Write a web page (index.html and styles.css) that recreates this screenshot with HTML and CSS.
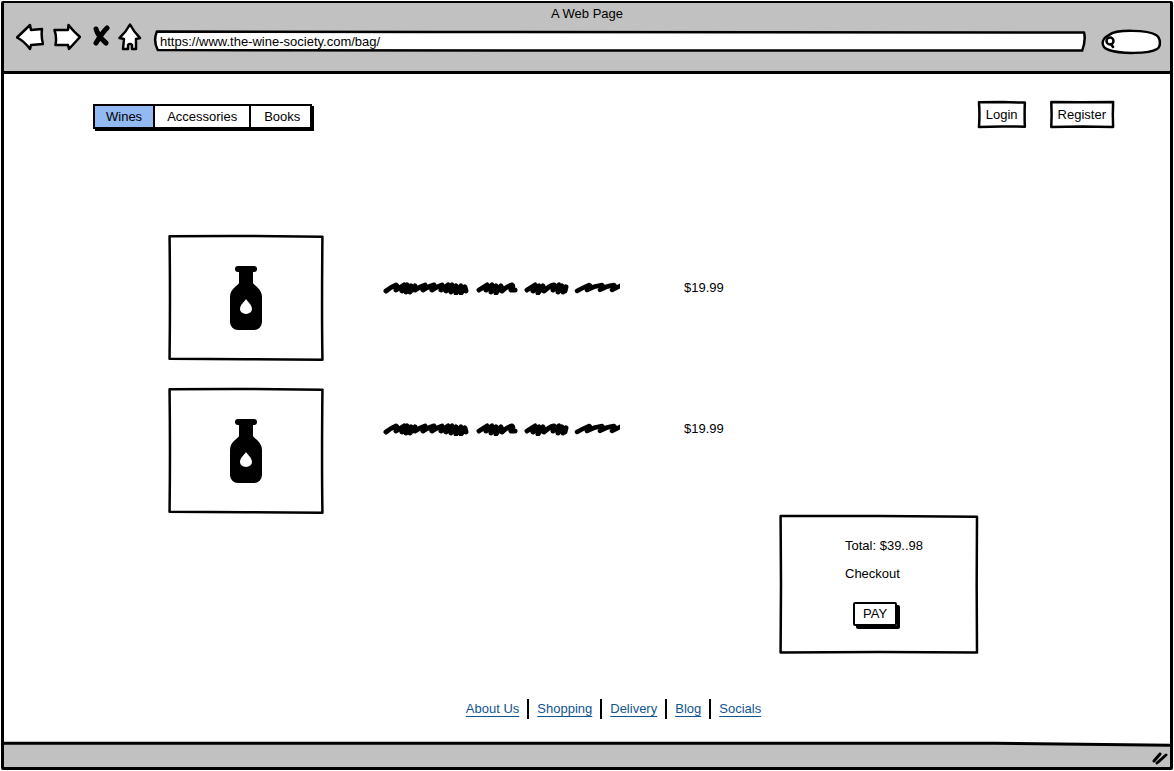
FILE: index.html
```html
<!DOCTYPE html>
<html lang="en">
<head>
<meta charset="utf-8">
<meta name="viewport" content="width=device-width, initial-scale=1">
<title>A Web Page</title>
<link rel="stylesheet" href="styles.css">
</head>
<body>
<svg class="defs" width="0" height="0" aria-hidden="true">
  <symbol id="bottle" viewBox="0 0 32 64">
    <path fill="#000" d="M8 0h16a3 3 0 0 1 0 6h-1v11c0 2 9 5 9 14v25a8 8 0 0 1-8 8H8a8 8 0 0 1-8-8V31C0 22 9 19 9 17V6H8a3 3 0 0 1 0-6z"/>
    <path fill="#fff" d="M16 33c2 3 6 6 6 10a6 5 0 0 1-12 0c0-4 4-7 6-10z"/>
  </symbol>
  <symbol id="scribble" viewBox="0 0 237 14">
    <g fill="none" stroke="#000" stroke-width="5" stroke-linecap="round" stroke-linejoin="round">
      <path d="M3 10Q8 6 13 4Q15 5 13 9L21 4L19 10L24 4L23 11L28 5L27 11L32 5L32 9Q36 6 42 4Q43 6 40 9Q44 6 51 4Q52 6 49 9Q53 6 59 4Q60 6 58 9L65 4L63 10L69 4L68 11L73 5L73 12L78 5L78 12L82 6L83 10"/>
      <path d="M96 9L104 4L103 9L109 4L108 11L113 5L113 12L118 5L119 10Q124 5 129 4Q131 5 128 9L132 9"/>
      <path d="M144 9L152 4L150 10L156 5L155 12L160 5L161 10Q166 5 171 4L170 9L176 4L175 11L179 5L180 11L183 6L182 10"/>
      <path stroke-width="4.500" d="M194 10Q201 6 206 4Q209 5 204 9Q211 5 219 4Q221 5 217 9Q223 5 231 4Q233 5 229 9Q233 7 239 4"/>
    </g>
  </symbol>
</svg>
<div class="browser">
  <header class="chrome">
    <div class="chrome-title">A Web Page</div>
    <div class="toolbar">
      <div class="nav-icons">
        <button class="icon-btn" type="button" aria-label="Back"><svg width="28" height="28" viewBox="0 0 28 28"><path class="shape" d="M1 14.500L14 2L15 7L26 6Q25 14 27 21L15 22L14 26Q8 18 1 14.500Z"/></svg></button>
        <button class="icon-btn icon-btn-forward" type="button" aria-label="Forward"><svg width="28" height="28" viewBox="0 0 28 28"><path class="shape" d="M1.500 7L15 7L15.500 2Q21 9 27 14L16 26L15 22L2.500 22Q4 14 1.500 7Z"/></svg></button>
        <button class="icon-btn icon-btn-stop" type="button" aria-label="Stop"><svg width="18" height="28" viewBox="0 0 18 28"><path class="cross" d="M4 6Q6 13 14 20M15 5Q10 10 4 20"/></svg></button>
        <button class="icon-btn icon-btn-home" type="button" aria-label="Home"><svg width="24" height="28" viewBox="0 0 24 28"><path class="shape" d="M12 1.500Q16 9 22 15L18 16L18 26L14 26L14 22Q12 20 10 22L10 26L5 26L6 16L1.500 15Q8 9 12 1.500Z"/></svg></button>
      </div>
      <div class="address">
        <svg class="outline" viewBox="0 0 100 100" preserveAspectRatio="none" aria-hidden="true"><path class="fill" d="M0.300 3L30 5L99.900 8Q100.100 45 99.700 98L50 98L0.400 95Q-0.100 50 0.300 3Z"/></svg>
        <input class="address-input" type="text" aria-label="Address" value="https://www.the-wine-society.com/bag/">
      </div>
      <div class="search">
        <svg class="search-shape" width="62" height="26" viewBox="0 0 62 26" aria-hidden="true"><path class="shape" d="M9 6C16 0 48 1 56 6C61 9 61 18 57 20C49 25 20 25 9 21C0 18 1 10 9 6Z"/><circle class="shape" cx="10" cy="12" r="3.500"/><path class="shape" d="M11 15L13 18"/></svg>
        <input class="search-input" type="search" aria-label="Search">
      </div>
    </div>
  </header>

  <main class="page">
    <div class="topbar">
      <nav class="tabs" aria-label="Departments">
        <button class="tab tab-active" type="button">Wines</button>
        <button class="tab tab-wide" type="button">Accessories</button>
        <button class="tab tab-last" type="button">Books</button>
      </nav>
      <div class="account">
        <button class="box-btn" type="button"><svg class="outline" viewBox="0 0 100 100" preserveAspectRatio="none" aria-hidden="true"><path class="fill" d="M2 5L50 4L98 6Q97 50 98 95L50 94L2 96Q4 50 2 5Z"/></svg><span class="label">Login</span></button>
        <button class="box-btn" type="button"><svg class="outline" viewBox="0 0 100 100" preserveAspectRatio="none" aria-hidden="true"><path class="fill" d="M2 4L50 5L98 4Q97 50 98 96L50 94L2 96Q3 50 2 4Z"/></svg><span class="label">Register</span></button>
      </div>
    </div>

    <ul class="items">
      <li class="item">
        <div class="picture">
          <svg class="outline" viewBox="0 0 100 100" preserveAspectRatio="none" aria-hidden="true"><path class="fill" d="M1 1L40 0.700L99 1.300Q98.500 60 99 99L50 98.600L1 98.300Q1.500 50 1 1Z"/></svg>
          <svg class="bottle" width="32" height="64" role="img" aria-label="Bottle"><use href="#bottle"/></svg>
        </div>
        <div class="details">
          <svg class="scribble" width="237" height="14" aria-hidden="true"><use href="#scribble"/></svg>
          <span class="price">$19.99</span>
        </div>
      </li>
      <li class="item">
        <div class="picture">
          <svg class="outline" viewBox="0 0 100 100" preserveAspectRatio="none" aria-hidden="true"><path class="fill" d="M1 1L40 0.700L99 1.300Q98.500 60 99 99L50 98.600L1 98.300Q1.500 50 1 1Z"/></svg>
          <svg class="bottle" width="32" height="64" role="img" aria-label="Bottle"><use href="#bottle"/></svg>
        </div>
        <div class="details details-raised">
          <svg class="scribble" width="237" height="14" aria-hidden="true"><use href="#scribble"/></svg>
          <span class="price">$19.99</span>
        </div>
      </li>
    </ul>

    <section class="summary" aria-label="Summary">
      <svg class="outline" viewBox="0 0 100 100" preserveAspectRatio="none" aria-hidden="true"><path class="fill" d="M0.800 0.800L50 0.800L99 1.300Q98.700 50 99 99L50 98.500L0.800 99Q1.200 50 0.800 0.800Z"/></svg>
      <p class="line">Total: $39..98</p>
      <p class="line">Checkout</p>
      <button class="pay" type="button">PAY</button>
    </section>

    <nav class="links" aria-label="Site">
      <a class="link" href="#about">About Us</a>
      <a class="link" href="#shopping">Shopping</a>
      <a class="link" href="#delivery">Delivery</a>
      <a class="link" href="#blog">Blog</a>
      <a class="link" href="#socials">Socials</a>
    </nav>
  </main>

  <footer class="statusbar">
    <svg class="outline" viewBox="0 0 100 100" preserveAspectRatio="none" aria-hidden="true"><path class="bar" d="M0 5L85 5L100 13L100 100L0 100Z"/><path class="edge" d="M0 5L85 5L100 13"/></svg>
    <svg class="grip" width="18" height="14" viewBox="0 0 18 14" aria-hidden="true"><path class="grip-line" d="M3 10L9 3M6 12L15 4"/></svg>
  </footer>
</div>
</body>
</html>
```

FILE: styles.css
```css
* { box-sizing: border-box; }

body {
  margin: 0;
  background: #fff;
  color: #000;
  font-family: "Liberation Sans", Arial, sans-serif;
  font-size: 13px;
  line-height: 16px;
}

button, input {
  margin: 0;
  padding: 0;
  border: 0;
  background: none;
  color: inherit;
  font: inherit;
}

.defs { position: absolute; }

.browser {
  display: flex;
  flex-direction: column;
  min-height: calc(100vh - 2px);
  margin: 1px;
  border: 3px solid #000;
  border-top-width: 2px;
  border-radius: 2px;
}

.chrome {
  height: 71px;
  padding: 3px 8px 0 12px;
  border-bottom: 3px solid #000;
  background: #c1c1c1;
}

.chrome-title {
  padding-right: 4px;
  text-align: center;
}

.toolbar {
  display: flex;
  align-items: flex-start;
}

.nav-icons {
  display: flex;
  align-items: center;
  padding-top: 1px;
}

.icon-btn { display: flex; }
.icon-btn-forward { margin-left: 9px; }
.icon-btn-stop { margin-left: 11px; }
.icon-btn-home { margin-left: 8px; }

.shape, .fill {
  fill: #fff;
  stroke: #000;
  stroke-width: 2.5;
  stroke-linejoin: round;
  stroke-linecap: round;
  vector-effect: non-scaling-stroke;
}

.cross {
  fill: none;
  stroke: #000;
  stroke-width: 5;
  stroke-linecap: round;
}

.outline {
  position: absolute;
  inset: 0;
  width: 100%;
  height: 100%;
  overflow: visible;
}

.address {
  position: relative;
  flex: 1;
  height: 20px;
  margin: 9px 15px 0 12px;
}

.address-input {
  position: relative;
  display: block;
  width: 100%;
  height: 20px;
  padding: 0 6px;
}

.search {
  position: relative;
  width: 62px;
  height: 26px;
  margin-top: 7px;
}

.search-shape { position: absolute; inset: 0; }

.search-input {
  position: relative;
  display: block;
  width: 100%;
  height: 26px;
  padding: 0 8px 0 18px;
}

.page {
  flex: 1;
  display: flex;
  flex-direction: column;
  padding: 27px 56px 23px 89px;
}

.topbar {
  display: flex;
  justify-content: space-between;
  align-items: flex-start;
}

.tabs {
  display: flex;
  margin-top: 3px;
  border: 2px solid #000;
  box-shadow: 2px 2px 0 #000;
}

.tab {
  height: 21px;
  padding: 0 11px;
  border-right: 2px solid #000;
  background: #fff;
}

.tab-active { background: #93b9f3; }

.tab-wide { padding: 0 12px; }

.tab-last {
  padding: 0 10px 0 13px;
  border-right: 0;
}

.account {
  display: flex;
  gap: 24px;
}

.box-btn {
  position: relative;
  height: 27px;
  padding: 0 8px;
}

.label { position: relative; }

.items {
  display: flex;
  flex-direction: column;
  gap: 27px;
  margin: 106px 0 0 75px;
  padding: 0;
  list-style: none;
}

.item {
  display: flex;
  align-items: flex-start;
  gap: 59px;
}

.picture {
  position: relative;
  display: flex;
  align-items: center;
  justify-content: center;
  width: 156px;
  height: 126px;
}

.bottle { position: relative; }

.details {
  display: flex;
  align-items: center;
  gap: 64px;
  padding-top: 45px;
}

.details-raised { padding-top: 33px; }

.summary {
  position: relative;
  align-self: flex-end;
  width: 200px;
  margin: 1px 135px 0 0;
  padding: 23px 16px 28px 66px;
}

.line {
  position: relative;
  margin: 0 0 12px;
}

.pay {
  position: relative;
  display: block;
  height: 24px;
  margin: 20px 0 0 8px;
  padding: 0 8px;
  border: 2px solid #000;
  border-radius: 2px;
  box-shadow: 3px 3px 0 #000;
}

.links {
  display: flex;
  justify-content: center;
  margin: auto 0 0 20px;
}

.link {
  position: relative;
  padding: 2px 8px;
  color: #0f5592;
  text-underline-offset: 3px;
}

.link + .link { border-left: 2px solid #000; }

.statusbar {
  position: relative;
  display: flex;
  justify-content: flex-end;
  align-items: center;
  height: 25px;
  padding: 6px 1px 0 0;
}

.bar { fill: #c1c1c1; }

.edge {
  fill: none;
  stroke: #000;
  stroke-width: 3;
  vector-effect: non-scaling-stroke;
}

.grip { position: relative; }

.grip-line {
  fill: none;
  stroke: #000;
  stroke-width: 3;
  stroke-linecap: round;
}
```
